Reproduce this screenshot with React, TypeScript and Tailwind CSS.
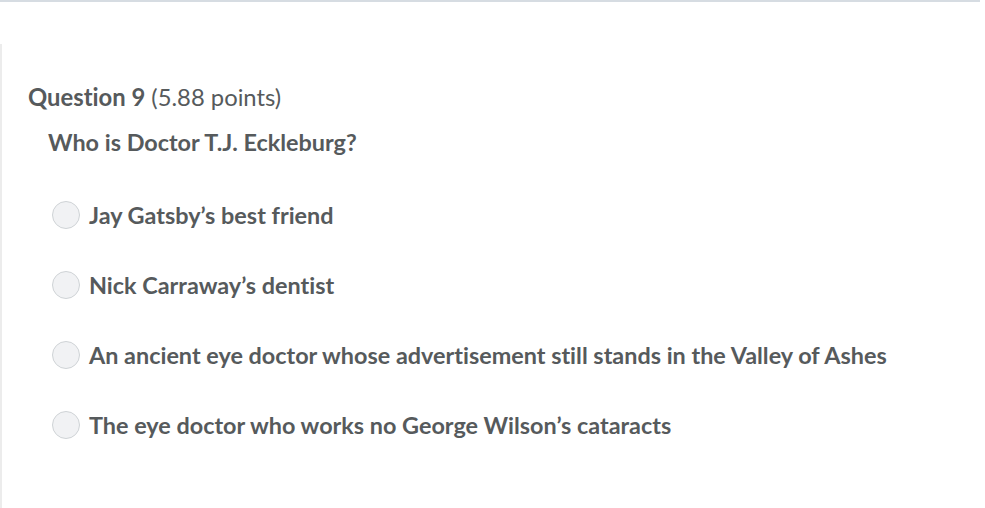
import { useState } from "react";

const options = [
  "Jay Gatsby’s best friend",
  "Nick Carraway’s dentist",
  "An ancient eye doctor whose advertisement still stands in the Valley of Ashes",
  "The eye doctor who works no George Wilson’s cataracts",
];

export default function App() {
  const [picked, setPicked] = useState<number | null>(null);

  return (
    <div className="w-[985px] h-[508px] bg-white overflow-hidden font-['Lato','Liberation_Sans',sans-serif] text-[#565a5c] [font-variant-ligatures:none]">
      <div className="h-[2px] w-[980px] bg-[#d6dce2]" />
      <div className="flex h-[506px]">
        <div className="mt-[42px] w-[2px] bg-[#ececec]" />
        <div className="flex-1 pt-[80px] pl-[26px]">
          <h2 className="text-[23.8px] leading-[30px]">
            <span className="font-bold">Question 9</span>{" "}
            <span className="font-normal">(5.88 points)</span>
          </h2>
          <p className="mt-[16px] pl-[20px] text-[23.4px] leading-[28px] font-bold">
            Who is Doctor T.J. Eckleburg?
          </p>
          <div className="mt-[45px] pl-[24px] flex flex-col gap-[42px]">
            {options.map((opt, i) => (
              <label key={i} className="flex items-center gap-[9px] h-[28px] cursor-pointer">
                <input
                  type="radio"
                  name="q9"
                  checked={picked === i}
                  onChange={() => setPicked(i)}
                  className="appearance-none w-[28px] h-[28px] rounded-full border border-[#cfd3d6] bg-[#f1f2f4] shrink-0"
                />
                <span className="text-[23.4px] leading-[28px] font-bold">{opt}</span>
              </label>
            ))}
          </div>
        </div>
      </div>
    </div>
  );
}
